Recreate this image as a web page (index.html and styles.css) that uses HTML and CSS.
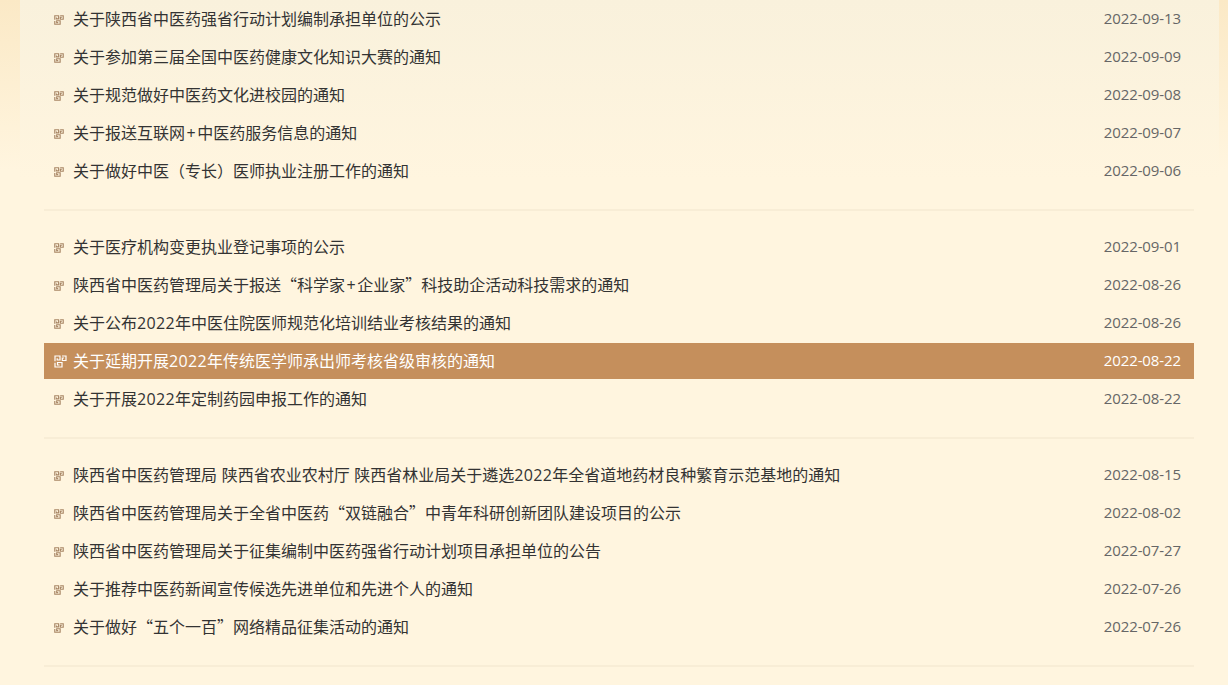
FILE: index.html
```html
<!DOCTYPE html>
<html lang="zh-CN">
<head>
    <meta charset="UTF-8">
    <title>通知公告</title>
    <link rel="stylesheet" href="styles.css">
</head>
<body>
    <svg class="defs" width="0" height="0">
        <symbol id="fret" viewBox="0 0 13 13">
            <path d="M1 6.2V1H6V5H3.2V3.2M8 1H12V5.5H8.3V3H10M1 7.7V12H8V7.5H3.5V10H5.5" fill="none" stroke="currentColor"/>
        </symbol>
    </svg>
    <div class="news-box">
        <ul class="news-list">
            <li><svg class="ico"><use href="#fret"/></svg><a>关于陕西省中医药强省行动计划编制承担单位的公示</a><span>2022-09-13</span></li>
            <li><svg class="ico"><use href="#fret"/></svg><a>关于参加第三届全国中医药健康文化知识大赛的通知</a><span>2022-09-09</span></li>
            <li><svg class="ico"><use href="#fret"/></svg><a>关于规范做好中医药文化进校园的通知</a><span>2022-09-08</span></li>
            <li><svg class="ico"><use href="#fret"/></svg><a>关于报送互联网<i class="plus">+</i>中医药服务信息的通知</a><span>2022-09-07</span></li>
            <li><svg class="ico"><use href="#fret"/></svg><a>关于做好中医（专长）医师执业注册工作的通知</a><span>2022-09-06</span></li>
        </ul>
        <ul class="news-list">
            <li><svg class="ico"><use href="#fret"/></svg><a>关于医疗机构变更执业登记事项的公示</a><span>2022-09-01</span></li>
            <li><svg class="ico"><use href="#fret"/></svg><a>陕西省中医药管理局关于报送“科学家<i class="plus">+</i>企业家”科技助企活动科技需求的通知</a><span>2022-08-26</span></li>
            <li><svg class="ico"><use href="#fret"/></svg><a>关于公布<i class="num">2022</i>年中医住院医师规范化培训结业考核结果的通知</a><span>2022-08-26</span></li>
            <li class="on"><svg class="ico"><use href="#fret"/></svg><a>关于延期开展<i class="num">2022</i>年传统医学师承出师考核省级审核的通知</a><span>2022-08-22</span></li>
            <li><svg class="ico"><use href="#fret"/></svg><a>关于开展<i class="num">2022</i>年定制药园申报工作的通知</a><span>2022-08-22</span></li>
        </ul>
        <ul class="news-list">
            <li><svg class="ico"><use href="#fret"/></svg><a>陕西省中医药管理局<i class="gap"> </i>陕西省农业农村厅<i class="gap"> </i>陕西省林业局关于遴选<i class="num">2022</i>年全省道地药材良种繁育示范基地的通知</a><span>2022-08-15</span></li>
            <li><svg class="ico"><use href="#fret"/></svg><a>陕西省中医药管理局关于全省中医药“双链融合”中青年科研创新团队建设项目的公示</a><span>2022-08-02</span></li>
            <li><svg class="ico"><use href="#fret"/></svg><a>陕西省中医药管理局关于征集编制中医药强省行动计划项目承担单位的公告</a><span>2022-07-27</span></li>
            <li><svg class="ico"><use href="#fret"/></svg><a>关于推荐中医药新闻宣传候选先进单位和先进个人的通知</a><span>2022-07-26</span></li>
            <li><svg class="ico"><use href="#fret"/></svg><a>关于做好“五个一百”网络精品征集活动的通知</a><span>2022-07-26</span></li>
        </ul>
    </div>
</body>
</html>
```

FILE: styles.css
```css
html, body { margin: 0; padding: 0; height: 685px; overflow: hidden; }
body { background: linear-gradient(#fbe9c6, #fff5df 170px) #fff5df; font-family: "Noto Sans CJK SC", sans-serif; color: #333; }
.defs { display: block; height: 0; }
.news-box { margin: 0 9px 0 20px; padding: 1px 25px 0 24px; background: linear-gradient(#f9f1dc, #fff5df 180px); }
.news-list { list-style: none; margin: 0 0 18px; padding: 0 0 18px; border-bottom: 2px solid #f8edd6; }
.news-list li { display: flex; align-items: center; height: 36px; margin-bottom: 2px; padding: 0 13px 0 10px; font-size: 16px; color: #333; }
.news-list li a { flex: 1; margin-bottom: 2px; }
.news-list li i { font-style: normal; font-family: "Open Sans", sans-serif; }
.news-list .num { letter-spacing: .35px; }
.news-list .plus { margin: 0 1.5px; }
.news-list .gap { margin-right: .5px; }
.news-list li span { margin-bottom: 2px; font-family: "Open Sans", sans-serif; font-size: 15px; letter-spacing: -.1px; color: #666; }
.news-list .ico { width: 10px; height: 10px; margin: 1px 9px 0 0; color: #a98766; stroke-width: 1.5; }
.news-list li.on { background-color: #c58f5c; color: #fff; }
.news-list li.on span { color: #fff; }
.news-list li.on .ico { width: 13px; height: 13px; margin-right: 6px; color: #fff; stroke-width: 1.2; }
```
